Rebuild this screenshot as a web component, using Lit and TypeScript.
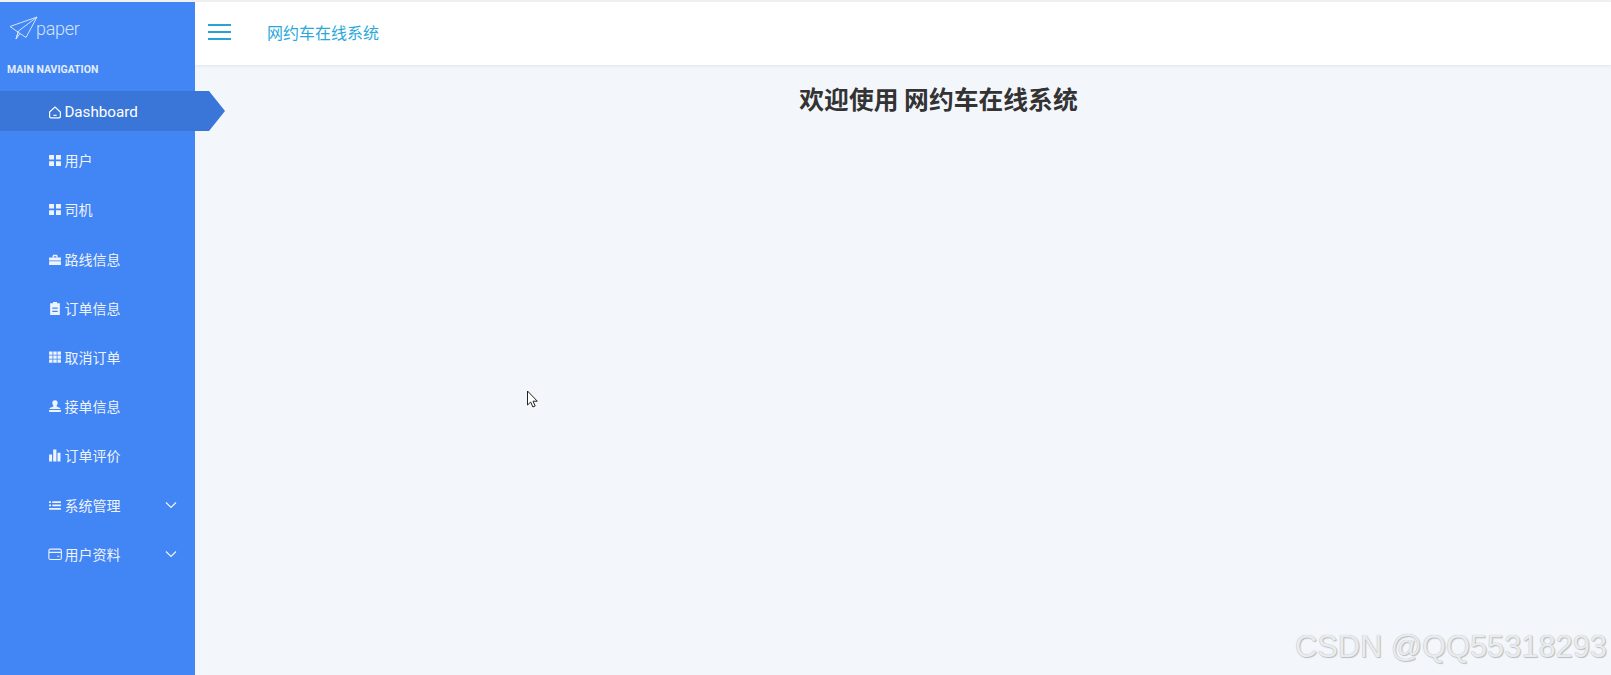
import { LitElement, html, css, svg } from "lit";
import { customElement } from "lit/decorators.js";

const icons: Record<string, unknown> = {
  home: svg`<path d="M1.5 6.5 6.5 2l5 4.5v4.2a1.3 1.3 0 0 1-1.3 1.3H2.8a1.3 1.3 0 0 1-1.3-1.3z" fill="none" stroke="currentColor" stroke-width="1.1"/><path d="M5 9.6h3" stroke="currentColor" stroke-width="1.1"/>`,
  grid: svg`<path d="M1 1.8h4.6v4.3H1zM7.4 1.8H12v4.3H7.4zM1 7.7h4.6V12H1zM7.4 7.7H12V12H7.4z" fill="currentColor"/>`,
  bag: svg`<path d="M4.6 5.2 5.2 3.2h2.8l.6 2" fill="none" stroke="currentColor" stroke-width="1.3"/><path d="M1 5.2h11v2.6H1zM1 8.6h11V12H1z" fill="currentColor"/>`,
  clip: svg`<path fill-rule="evenodd" d="M2 2.2h2.6V1h3.8v1.2H11V13H2zM4 6v1.2h5V6zM4 9v1.2h5V9z" fill="currentColor"/>`,
  table: svg`<path d="M1 1.5h3.2v3H1zM4.9 1.5h3.2v3H4.9zM8.8 1.5H12v3H8.8zM1 5.2h3.2v3H1zM4.9 5.2h3.2v3H4.9zM8.8 5.2H12v3H8.8zM1 8.9h3.2v3H1zM4.9 8.9h3.2v3H4.9zM8.8 8.9H12v3H8.8z" fill="currentColor"/>`,
  stamp: svg`<path d="M4 3.6a2.5 2.5 0 1 1 5 0c0 1.3-1 2-1 3.2 0 .7 3.3.7 3.6 2.6H1.4C1.7 7.5 5 7.5 5 6.8c0-1.2-1-1.9-1-3.2zM1 10.2h11V12H1z" fill="currentColor"/>`,
  chart: svg`<path d="M1 6h2.8v6.6H1zM4.8 1.5h3v11.1h-3zM8.8 4.5h2.8v8.1H8.8z" fill="currentColor"/>`,
  list: svg`<path d="M1 3h1.8v1.6H1zM4 3h8v1.6H4zM1 6h1.8v1.6H1zM4 6h8v1.6H4zM1 9.2h11v1.6H1z" fill="currentColor"/>`,
  wallet: svg`<rect x=".8" y="2" width="11.6" height="9.6" rx="1.5" fill="none" stroke="currentColor" stroke-width="1"/><path d="M1 5h11.2M8.5 8.6h2" stroke="currentColor" stroke-width="1" fill="none"/>`,
};

const items = [
  { icon: "home", label: "Dashboard", active: true },
  { icon: "grid", label: "用户" },
  { icon: "grid", label: "司机" },
  { icon: "bag", label: "路线信息" },
  { icon: "clip", label: "订单信息" },
  { icon: "table", label: "取消订单" },
  { icon: "stamp", label: "接单信息" },
  { icon: "chart", label: "订单评价" },
  { icon: "list", label: "系统管理", more: true },
  { icon: "wallet", label: "用户资料", more: true },
];

@customElement("app-root")
export class AppRoot extends LitElement {
  static styles = css`
    :host {
      display: block;
      position: relative;
      height: 675px;
      overflow: hidden;
      background: #f3f7fb;
      font-family: "Roboto", "Noto Sans CJK SC", sans-serif;
    }
    .frame { display: flex; height: 673px; border-top: 2px solid #f1f1f1; }
    .side { width: 195px; flex: none; background: #4285f4; color: #fff; position: relative; z-index: 2; }
    .logo { display: flex; align-items: center; height: 52px; padding-left: 9px; color: #d5e4fb; }
    .logo svg { width: 29px; height: 24px; flex: none; }
    .logo span { font-size: 18px; font-weight: 300; letter-spacing: -0.3px; margin-left: -2px; line-height: 1; padding-top: 1px; }
    .cap { font-size: 10.5px; font-weight: 700; color: #e3edfd; padding-left: 7px; line-height: 14px; height: 14px; margin-top: 9px; margin-bottom: 14px; }
    .nav { display: flex; flex-direction: column; gap: 9.2px; }
    .item { display: flex; align-items: center; height: 40px; padding-left: 48px; font-size: 14px; color: #eef4fe; position: relative; }
    .item svg.ic { width: 14px; height: 14px; flex: none; margin-right: 2.4px; }
    .item.active { background: #3a76d8; color: #fff; font-size: 15.2px; width: 161px; padding-top: 1px; height: 39px; }
    .item.active::after {
      content: ""; position: absolute; left: 209px; top: 0;
      width: 0; height: 0;
      border-top: 20px solid transparent; border-bottom: 20px solid transparent;
      border-left: 16px solid #3a76d8;
    }
    .chev { position: absolute; left: 165px; width: 12px; height: 8px; }
    .main { flex: 1; display: flex; flex-direction: column; min-width: 0; }
    .top { height: 60px; padding-bottom: 3px; flex: none; background: #fff; box-shadow: 0 1px 3px rgba(0,0,0,.08); display: flex; align-items: center; padding-left: 13px; }
    .burger { display: flex; flex-direction: column; gap: 5px; width: 23px; margin-right: 36px; }
    .burger i { display: block; height: 2px; background: #2aa3d3; }
    .brand { font-size: 16px; color: #2ba8da; }
    h1 { margin: 0; padding-top: 18px; padding-left: 71px; text-align: center; font-size: 24.8px; line-height: 30px; font-weight: 700; color: #333; font-family: "Noto Sans CJK SC", sans-serif; }
    .wm { position: absolute; right: 4px; bottom: 12px; font: 30.8px/1 "Liberation Sans", sans-serif; color: #e9ecef; text-shadow: 0 0 1px #b0b0b0, 1px 1px 1px #bdbdbd; white-space: nowrap; }
    .cursor { position: absolute; left: 526px; top: 390px; width: 14px; height: 20px; }
  `;

  render() {
    return html`
      <div class="frame">
        <aside class="side">
          <div class="logo">
            <svg viewBox="0 0 29 24" fill="none" stroke="currentColor" stroke-width="1">
              <path d="M1 10.5 28 1 17 21.5 11 17.5 1 10.5zM28 1 9.5 15 7 23l4-5.5M9.5 15 7 23" />
            </svg>
            <span>paper</span>
          </div>
          <div class="cap">MAIN NAVIGATION</div>
          <nav class="nav">
            ${items.map(
              (it) => html`<div class="item ${it.active ? "active" : ""}">
                <svg class="ic" viewBox="0 0 13 13">${icons[it.icon]}</svg>${it.label}
                ${it.more
                  ? html`<svg class="chev" viewBox="0 0 12 8"><path d="M1 1.5 6 6.5l5-5" fill="none" stroke="currentColor" stroke-width="1.2"/></svg>`
                  : ""}
              </div>`
            )}
          </nav>
        </aside>
        <div class="main">
          <header class="top">
            <div class="burger"><i></i><i></i><i></i></div>
            <div class="brand">网约车在线系统</div>
          </header>
          <h1>欢迎使用 网约车在线系统</h1>
        </div>
      </div>
      <div class="wm">CSDN @QQ55318293</div>
      <svg class="cursor" viewBox="0 0 14 20"><path d="M1.5 1v14l3.2-3 2.2 5 2.3-1-2.2-4.8h4.3z" fill="#fff" stroke="#222" stroke-width="1"/></svg>
    `;
  }
}
